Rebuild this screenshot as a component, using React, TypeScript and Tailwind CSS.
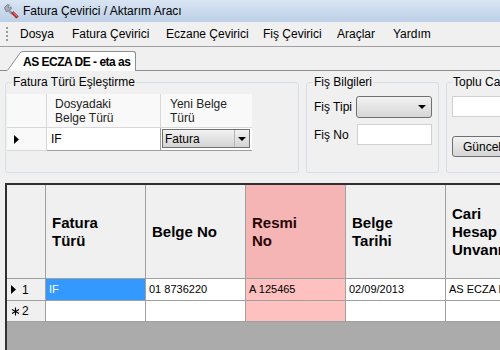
import React from "react";

function AppIcon() {
  return (
    <svg width="16" height="16" viewBox="0 0 16 16">
      <path d="M1.5 4.5 L4.5 1.5 L6.5 2.2 L5 3.8 L6.3 5.2 L7.8 3.7 L8.4 5.6 L6.6 7.2 L9.6 10.2 L8.6 11.2 L5.4 8 L3.2 8.6 Z" fill="#a7afb8" stroke="#59626c" strokeWidth="0.7" />
      <path d="M8.6 10.2 L10.2 8.6 L15.2 13.4 L13.4 15.2 Z" fill="#d8262d" stroke="#861116" strokeWidth="0.7" />
      <path d="M10.4 9.8 L14.2 13.4" stroke="#f4a0a3" strokeWidth="0.8" />
    </svg>
  );
}

function DownArrow() {
  return (
    <svg width="8" height="4" viewBox="0 0 8 4">
      <path d="M0 0 H8 L4 4 Z" fill="#000" />
    </svg>
  );
}

function RowArrow() {
  return (
    <svg width="5" height="9" viewBox="0 0 5 9">
      <path d="M0 0 L5 4.5 L0 9 Z" fill="#000" />
    </svg>
  );
}

function NewRowStar() {
  return (
    <svg width="9" height="9" viewBox="0 0 9 9">
      <path d="M4.5 0.5 V8.5 M1 2.5 L8 6.5 M1 6.5 L8 2.5" stroke="#000" strokeWidth="1.1" />
    </svg>
  );
}

const menuItems = [
  { label: "Dosya", w: "w-[52px]" },
  { label: "Fatura Çevirici", w: "w-[94px]" },
  { label: "Eczane Çevirici", w: "w-[97px]" },
  { label: "Fiş Çevirici", w: "w-[74px]" },
  { label: "Araçlar", w: "w-[56px]" },
  { label: "Yardım", w: "w-[60px]" },
];

const cols = [
  { title: ["Fatura", "Türü"], pink: false },
  { title: ["Belge No"], pink: false },
  { title: ["Resmi", "No"], pink: true },
  { title: ["Belge", "Tarihi"], pink: false },
  { title: ["Cari", "Hesap", "Unvanı"], pink: false },
];

const row1 = ["IF", "01 8736220", "A 125465", "02/09/2013", "AS ECZA DEPOSU"];

export default function App() {
  return (
    <div className="flex h-[350px] w-[500px] flex-col overflow-hidden bg-[#f0f0f0] font-['Liberation_Sans',Arial,sans-serif] text-black">
      {/* title bar */}
      <div className="flex h-[22px] shrink-0 items-center gap-[4px] bg-gradient-to-b from-[#d9e5f3] to-[#bccfe6] pl-[3px]">
        <AppIcon />
        <span className="text-[12px] leading-none">Fatura Çevirici / Aktarım Aracı</span>
      </div>

      {/* menu */}
      <div className="flex h-[25px] shrink-0 items-center border-b border-[#a0a0a0] bg-[#f0f0f0]">
        <div className="ml-[6px] mr-[12px] flex flex-col gap-[2px]">
          <div className="h-[2px] w-[2px] bg-[#9a9a9a]" />
          <div className="h-[2px] w-[2px] bg-[#9a9a9a]" />
          <div className="h-[2px] w-[2px] bg-[#9a9a9a]" />
          <div className="h-[2px] w-[2px] bg-[#9a9a9a]" />
        </div>
        {menuItems.map((m) => (
          <span key={m.label} className={`${m.w} shrink-0 text-[12px]`}>
            {m.label}
          </span>
        ))}
      </div>

      {/* tab strip */}
      <div className="mt-[4px] flex h-[20px] shrink-0 items-end">
        <div className="h-full w-[7px] border-b border-[#8c8e94]" />
        <svg width="16" height="20" viewBox="0 0 16 20" className="shrink-0">
          <path d="M0 20 L13 2 Q14.5 0.5 16 0.5 V20 Z" fill="#fff" />
          <path d="M0.5 19.5 L13 2 Q14.5 0.5 16 0.5" fill="none" stroke="#8c8e94" />
        </svg>
        <div className="flex h-full items-center rounded-tr-[3px] border-r border-t border-[#8c8e94] bg-white pr-[5px] text-[12px] font-bold tracking-[-0.5px]">
          AS ECZA DE - eta as
        </div>
        <div className="h-full flex-1 border-b border-[#8c8e94]" />
      </div>

      {/* group boxes */}
      <div className="flex shrink-0 gap-[7px] pl-[5px] pt-[4px] text-[12px]">
        <fieldset className="h-[98px] w-[294px] shrink-0 rounded-[3px] border border-[#d5dfe5]">
          <legend className="ml-[6px] px-px leading-[15px]">Fatura Türü Eşleştirme</legend>
          <div className="ml-px mt-[4px] w-[245px]">
            <div className="flex h-[34px] bg-[#f9f9f9]">
              <div className="w-[40px] border-b border-r border-[#d8d8d8]" />
              <div className="flex w-[114px] items-center border-b border-r border-[#d8d8d8] pl-[8px] leading-[14px] text-[#222]">
                Dosyadaki
                <br />
                Belge Türü
              </div>
              <div className="flex w-[91px] items-center border-b border-[#d8d8d8] pl-[9px] leading-[14px] text-[#222]">
                Yeni Belge
                <br />
                Türü
              </div>
            </div>
            <div className="flex h-[23px]">
              <div className="flex w-[40px] items-center border-b border-r border-[#d8d8d8] bg-[#f9f9f9] pl-[7px]">
                <RowArrow />
              </div>
              <div className="flex w-[114px] items-center border-b border-r border-[#a0a0a0] bg-white pl-[4px]">IF</div>
              <div className="w-[91px] border-b border-[#a0a0a0] bg-white pb-[1px] pl-px pr-[2px] pt-px">
                <div className="flex h-[19px] items-stretch border border-[#707070] bg-gradient-to-b from-[#f2f2f2] to-[#d4d4d4]">
                  <span className="flex flex-1 items-center pl-[2px]">Fatura</span>
                  <span className="flex w-[15px] items-center justify-center border-l border-[#b5b5b5]">
                    <DownArrow />
                  </span>
                </div>
              </div>
            </div>
          </div>
        </fieldset>

        <fieldset className="h-[98px] w-[133px] shrink-0 rounded-[3px] border border-[#d5dfe5]">
          <legend className="ml-[6px] px-px leading-[15px]">Fiş Bilgileri</legend>
          <div className="mt-[6px] flex items-center">
            <span className="w-[49px] pl-[7px]">Fiş Tipi</span>
            <div className="flex h-[22px] w-[76px] items-center justify-end rounded-[3px] border border-[#707070] bg-gradient-to-b from-[#f2f2f2] to-[#d6d6d6] pr-[5px]">
              <DownArrow />
            </div>
          </div>
          <div className="mt-[6px] flex items-center">
            <span className="w-[50px] pl-[7px]">Fiş No</span>
            <div className="h-[21px] w-[75px] border border-[#d0d0d0] bg-white" />
          </div>
        </fieldset>

        <fieldset className="h-[98px] w-[160px] shrink-0 rounded-[3px] border border-[#d5dfe5]">
          <legend className="ml-[5px] whitespace-nowrap px-px leading-[15px]">Toplu Cari Güncelleme</legend>
          <div className="ml-[5px] mt-[6px] h-[21px] w-[140px] border border-[#d0d0d0] bg-white" />
          <div className="ml-[5px] mt-[19px] flex h-[21px] w-[100px] items-center rounded-[3px] border border-[#707070] bg-gradient-to-b from-[#f2f2f2] to-[#d6d6d6] pl-[10px]">
            Güncelle
          </div>
        </fieldset>
      </div>

      {/* main grid */}
      <div className="ml-[5px] mt-[10px] flex-1 border-l-2 border-t-2 border-[#303030] bg-[#ababab]">
        <div className="flex h-[94px]">
          <div className="w-[39px] shrink-0 border-b border-r border-[#a0a0a0] bg-[#f0f0f0]" />
          {cols.map((c) => (
            <div
              key={c.title.join(" ")}
              className={`flex w-[100px] shrink-0 items-center border-b border-r border-[#a0a0a0] px-[6px] text-[15px] font-bold leading-[18px] ${
                c.pink ? "bg-[#f5b5b5] text-[#2a0505]" : "bg-[#f0f0f0]"
              }`}
            >
              <div>
                {c.title.map((t) => (
                  <div key={t}>{t}</div>
                ))}
              </div>
            </div>
          ))}
        </div>
        <div className="flex h-[22px] text-[11px]">
          <div className="flex w-[39px] shrink-0 items-center gap-[6px] border-b border-r border-[#a0a0a0] bg-[#f0f0f0] pl-[4px] text-[12px]">
            <RowArrow />
            <span>1</span>
          </div>
          {row1.map((v, i) => (
            <div
              key={v}
              className={`flex w-[100px] shrink-0 items-center overflow-hidden whitespace-nowrap border-b border-r border-[#a0a0a0] pl-[3px] ${
                i === 0 ? "bg-[#3399ff] text-white" : i === 2 ? "bg-[#ffc0c0]" : "bg-white"
              }`}
            >
              {v}
            </div>
          ))}
        </div>
        <div className="flex h-[21px] text-[11px]">
          <div className="flex w-[39px] shrink-0 items-center gap-[2px] border-b border-r border-[#a0a0a0] bg-[#f0f0f0] pl-[4px] text-[12px]">
            <NewRowStar />
            <span>2</span>
          </div>
          {cols.map((c, i) => (
            <div
              key={i}
              className={`w-[100px] shrink-0 border-b border-r border-[#a0a0a0] ${c.pink ? "bg-[#ffc0c0]" : "bg-white"}`}
            />
          ))}
        </div>
      </div>
    </div>
  );
}
